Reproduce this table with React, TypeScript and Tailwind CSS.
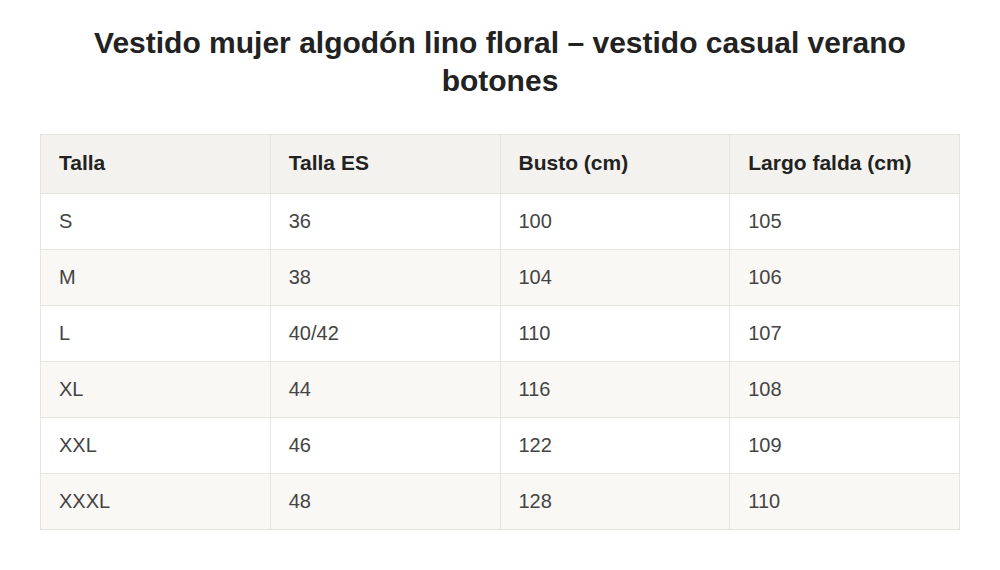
const rows = [
  ["S", "36", "100", "105"],
  ["M", "38", "104", "106"],
  ["L", "40/42", "110", "107"],
  ["XL", "44", "116", "108"],
  ["XXL", "46", "122", "109"],
  ["XXXL", "48", "128", "110"],
];

const headers = ["Talla", "Talla ES", "Busto (cm)", "Largo falda (cm)"];

export default function App() {
  return (
    <div className="min-h-[570px] bg-white px-10 pt-[24px] font-['Liberation_Sans',Arial,sans-serif] text-[#333]">
      <h1 className="text-center text-[30px] font-bold leading-[38px] text-[#222]">
        Vestido mujer algodón lino floral – vestido casual verano botones
      </h1>
      <table className="mt-[34px] w-full table-fixed border-collapse border border-[#e6e4df] text-left text-[20px]">
        <thead>
          <tr className="bg-[#f3f2ee]">
            {headers.map((h) => (
              <th key={h} className="h-[59px] border border-[#e6e4df] px-[18px] pb-[2px] text-[21px] font-bold text-[#222]">
                {h}
              </th>
            ))}
          </tr>
        </thead>
        <tbody>
          {rows.map((r, i) => (
            <tr key={r[0]} className={i % 2 === 1 ? "bg-[#f9f8f5]" : "bg-white"}>
              {r.map((c, j) => (
                <td key={j} className="h-[56px] border border-[#e6e4df] px-[18px] pb-[2px] text-[#444]">
                  {c}
                </td>
              ))}
            </tr>
          ))}
        </tbody>
      </table>
    </div>
  );
}
